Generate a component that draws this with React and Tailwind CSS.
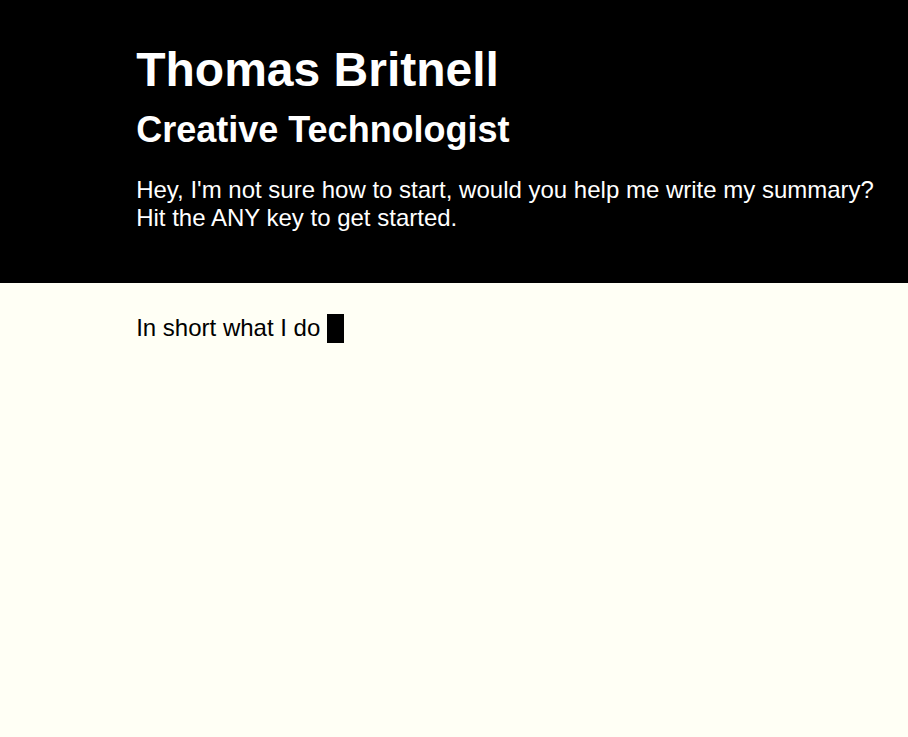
import React from 'react';

const App = () => {
  return (
    <div className="min-h-[737px] bg-[#fffff5] font-['Liberation_Sans',Arial,sans-serif] text-black">
      {/* Header */}
      <header className="bg-black text-white pl-[15%] pr-[20px] pt-[42px] pb-[52px]">
        <h1 className="text-[48px] leading-[55px] font-bold">Thomas Britnell</h1>
        <h2 className="text-[36px] leading-[41px] font-bold mt-[12px]">Creative Technologist</h2>
        <p className="text-[24px] leading-[27.5px] mt-[26px]">
          Hey, I'm not sure how to start, would you help me write my summary?
          <br />
          Hit the ANY key to get started.
        </p>
      </header>

      {/* Prompt */}
      <main className="pl-[15%] pr-[20px] pt-[29px]">
        <div className="flex items-center text-[24px] leading-[30px]">
          <span>In short what I do</span>
          <span className="inline-block w-[17px] h-[29px] bg-black ml-[7px] mt-[2px]" />
        </div>
      </main>
    </div>
  );
};

export default App;
